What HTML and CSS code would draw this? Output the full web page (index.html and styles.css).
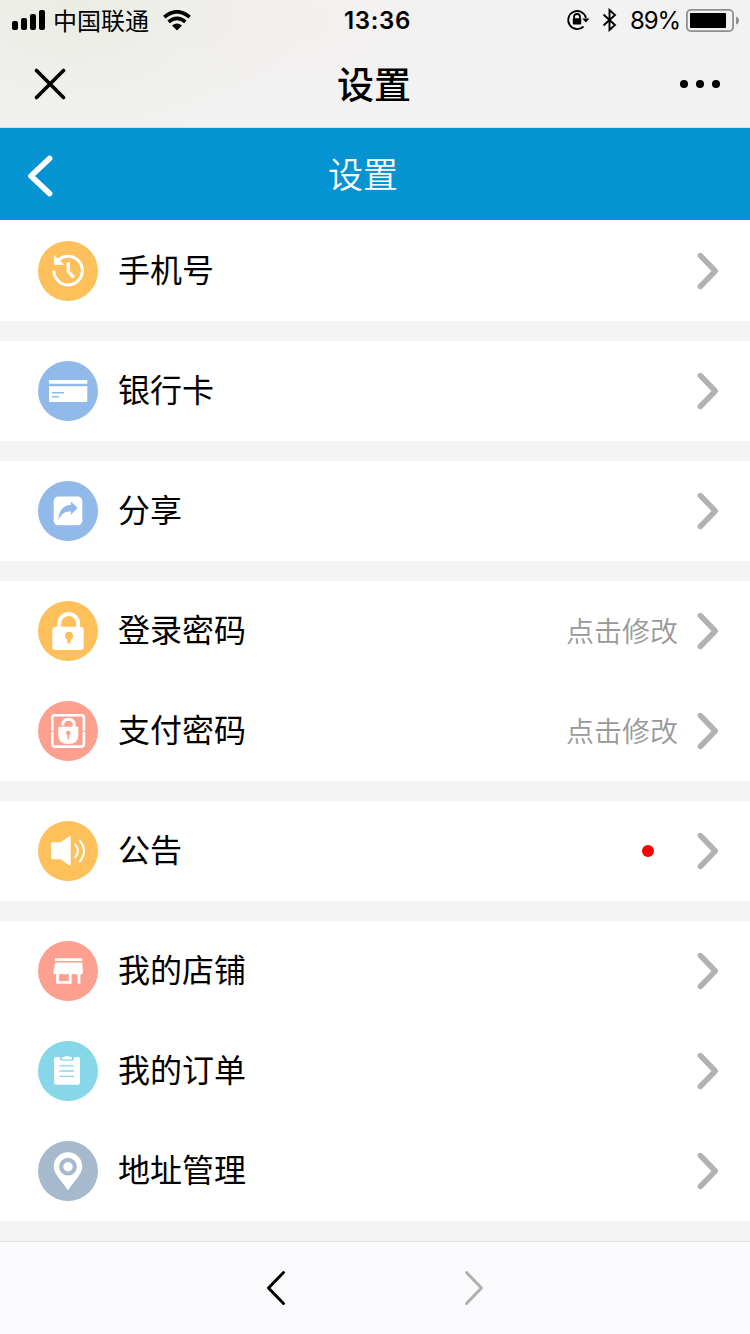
FILE: index.html
```html
<!DOCTYPE html>
<html lang="zh-CN">
<head>
<meta charset="utf-8">
<title>设置</title>
<link rel="stylesheet" href="styles.css">
</head>
<body>
<svg class="defs" width="0" height="0" aria-hidden="true">
  <symbol id="chevron" viewBox="0 0 24 40"><path d="M4.300 4.500 19.300 20 4.300 35.500" fill="none" stroke="#b2b2b2" stroke-width="5.400" stroke-linecap="round" stroke-linejoin="round"/></symbol>
</svg>
<div class="phone">
  <div class="top">
    <div class="status">
      <div class="status-left">
        <svg class="signal" width="33" height="20" viewBox="0 0 33 20"><rect y="11" width="6" height="9" rx="2"/><rect x="9" y="8" width="6" height="12" rx="2"/><rect x="18" y="4" width="6" height="16" rx="2"/><rect x="27" width="6" height="20" rx="2"/></svg>
        <span class="carrier">中国联通</span>
        <svg class="wifi" width="28" height="21" viewBox="0 0 28 21"><g fill="none" stroke="#000" stroke-width="3.700"><path d="M1.300 7.200Q14-3.600 26.700 7.200"/><path d="M5.600 11.800Q14 4.800 22.400 11.800"/></g><path d="M9 15.500Q14 11.500 19 15.500L14 20.500Z"/></svg>
      </div>
      <div class="time">13:36</div>
      <div class="status-right">
        <svg class="rotation" width="24" height="22" viewBox="0 0 24 22"><g fill="none" stroke="#000" stroke-width="1.800"><path d="M20 9A9 9 0 1 0 17.500 17.500"/><path d="M8 10V8a3 3 0 0 1 6 0v2"/></g><path d="M16.200 9.500h7.300l-3.600 4z"/><rect x="6.800" y="9.200" width="8.400" height="6.300" rx="1"/></svg>
        <svg class="bluetooth" width="15" height="24" viewBox="0 0 15 24"><path d="M1.500 6.500 13 17 7.500 22V2L13 7 1.500 17.500" fill="none" stroke="#000" stroke-width="1.900"/></svg>
        <span class="percent">89%</span>
        <svg class="battery" width="53" height="23" viewBox="0 0 53 23"><rect x=".9" y=".9" width="46.200" height="21.200" rx="4" fill="none" stroke="#909090" stroke-width="1.800"/><rect x="4" y="4" width="36" height="15" rx=".8"/><path d="M50 7.500Q53 8.500 53 11.500T50 15.500Z" fill="#909090"/></svg>
      </div>
    </div>
    <div class="titlebar">
      <svg width="32" height="32" viewBox="0 0 32 32"><path d="M2.500 2.500 29.500 29.500M29.500 2.500 2.500 29.500" stroke="#000" stroke-width="3.600" stroke-linecap="round"/></svg>
      <div class="title">设置</div>
      <svg width="40" height="8" viewBox="0 0 40 8"><circle cx="4" cy="4" r="4"/><circle cx="20" cy="4" r="4"/><circle cx="36" cy="4" r="4"/></svg>
    </div>
  </div>
  <div class="header">
    <svg width="26" height="42" viewBox="0 0 26 42"><path d="M22.500 3.500 4 21 22.500 38.500" fill="none" stroke="#fff" stroke-width="5.800" stroke-linecap="round" stroke-linejoin="round"/></svg>
    <div class="header-title">设置</div>
  </div>
  <div class="list">
    <div class="group">
      <div class="row">
        <svg class="icon orange" viewBox="0 0 60 60"><path d="M15.800 29.500A14.300 14.300 0 1 0 20.500 19" class="line" stroke-width="3"/><path d="M16.300 14.700v8.800h9.300z" stroke="#fff" stroke-width=".8" stroke-linejoin="round"/><path d="M30.300 21.500v9.200l5.500 5.700" class="line" stroke-width="3.200"/></svg>
        <span class="label">手机号</span><svg class="chevron"><use href="#chevron"/></svg>
      </div>
    </div>
    <div class="group">
      <div class="row">
        <svg class="icon blue" viewBox="0 0 60 60"><path d="M11 19h38.300v3.700H11z"/><path d="M11 25.300h38.300v14.200q0 1.500-1.500 1.500H12.500q-1.500 0-1.500-1.500z"/><path d="M14 31.700h12M14 35.700h7" class="cut" stroke-width="1.400"/></svg>
        <span class="label">银行卡</span><svg class="chevron"><use href="#chevron"/></svg>
      </div>
    </div>
    <div class="group">
      <div class="row">
        <svg class="icon blue" viewBox="0 0 60 60"><rect x="15.700" y="15.500" width="28.600" height="28.800" rx="4.500"/><path class="hole" d="M33 20.500 39.500 27 33 33.700V30.600C27 30 23 33.500 20.300 39.200 20.500 30 25 24 33 23.700Z"/></svg>
        <span class="label">分享</span><svg class="chevron"><use href="#chevron"/></svg>
      </div>
    </div>
    <div class="group">
      <div class="row">
        <svg class="icon orange" viewBox="0 0 60 60"><path d="M21.300 27V22.500a9.400 9.400 0 0 1 18.800 0V27" class="line" stroke-width="4"/><rect x="14.300" y="25.800" width="31.400" height="23.200" rx="3.500"/><circle class="hole" cx="31" cy="34.800" r="4"/><path class="hole" d="M29.300 36h3.400v5q0 1.500-1.700 1.500t-1.700-1.500z"/></svg>
        <span class="label">登录密码</span><span class="hint">点击修改</span><svg class="chevron"><use href="#chevron"/></svg>
      </div>
      <div class="row">
        <svg class="icon pink" viewBox="0 0 60 60"><rect x="14.300" y="14.300" width="31.600" height="31.300" rx="2.500" class="line" stroke-width="2.600"/><path class="cut" d="M12 30.300h5M43 30.300h5" stroke-width="1.100"/><path d="M24.800 24.600v-1.200a5.700 5.200 0 0 1 11.400 0V26.500" class="line" stroke-width="3"/><path d="M20.300 25.700h20v8.300q0 9-10 9t-10-9z"/><circle class="hole" cx="30.300" cy="32" r="2.300"/><path class="hole" d="M29.300 33h2l-.3 5.500h-1.400z"/></svg>
        <span class="label">支付密码</span><span class="hint">点击修改</span><svg class="chevron"><use href="#chevron"/></svg>
      </div>
    </div>
    <div class="group">
      <div class="row">
        <svg class="icon orange" viewBox="0 0 60 60"><path d="M15 21.300h7.700L31 15.600q1.700-.8 1.700.8v27q0 1.600-1.700.8L22.700 38.300H15q-2 0-2-2v-13q0-2 2-2z"/><path d="M36.800 22.800q6 7 0 14.200M41.200 19q9.500 11 0 22.300" class="line" stroke-width="2.100"/></svg>
        <span class="label">公告</span><span class="dot"></span><svg class="chevron"><use href="#chevron"/></svg>
      </div>
    </div>
    <div class="group">
      <div class="row">
        <svg class="icon pink" viewBox="0 0 60 60"><path d="M17 17.200h27.300v2.900H17z"/><path d="M17.200 21.500h27l.8 10.300q-1.300 2.400-3.600 1-2.200 1.500-5.500 0-3 1.500-6 0-3 1.500-6 0-3 1.500-5.500 0-2.300 1-3.100-1z"/><path d="M19.600 31.500v9.900h12.600v-9.900M41 31.500V42.500" class="line" stroke-width="2.900"/></svg>
        <span class="label">我的店铺</span><svg class="chevron"><use href="#chevron"/></svg>
      </div>
      <div class="row">
        <svg class="icon cyan" viewBox="0 0 60 60"><rect x="16" y="16" width="26" height="27.800" rx="2.200"/><path class="hole" d="M22 15h14v2.500q0 2.200-2.200 2.200h-9.600q-2.200 0-2.200-2.200z"/><path d="M24 16h2.500q0-1.300 2.500-1.300t2.500 1.300H34v2.400H24z"/><path d="M21.500 24.800h14.300M21.500 30h14.300M21.500 35.400h14.300" class="cut" stroke-width="1.300"/></svg>
        <span class="label">我的订单</span><svg class="chevron"><use href="#chevron"/></svg>
      </div>
      <div class="row">
        <svg class="icon slate" viewBox="0 0 60 60"><path d="M30 11.200A14.300 14.300 0 0 1 44.300 25.500C44.300 33 36 40 30 49.500 24 40 15.700 33 15.700 25.500A14.300 14.300 0 0 1 30 11.200Z"/><circle class="hole" cx="30" cy="25.700" r="8.900"/><circle cx="30" cy="25.700" r="4.700"/></svg>
        <span class="label">地址管理</span><svg class="chevron"><use href="#chevron"/></svg>
      </div>
    </div>
  </div>
  <div class="toolbar">
    <svg width="20" height="36" viewBox="0 0 20 36"><path d="M17.500 2.500 2.500 18 17.500 33.500" fill="none" stroke="#000" stroke-width="3" stroke-linecap="round" stroke-linejoin="round"/></svg>
    <svg width="20" height="36" viewBox="0 0 20 36"><path d="M2.500 2.500 17.500 18 2.500 33.500" fill="none" stroke="#b0b0b1" stroke-width="3" stroke-linecap="round" stroke-linejoin="round"/></svg>
  </div>
</div>
</body>
</html>
```
FILE: styles.css
```css
* { box-sizing: border-box; }
body { margin: 0; font-family: "Noto Sans CJK SC", sans-serif; color: #000; }
svg { display: block; flex: none; }
.phone { width: 750px; height: 1334px; display: flex; flex-direction: column; background: #f4f4f4; overflow: hidden; }
.top {
  height: 128px;
  border-bottom: 1px solid #d9dde0;
  background:
    radial-gradient(ellipse 240px 140px at 70px 10px, #ebece4 0%, rgba(235, 236, 228, 0) 100%),
    radial-gradient(ellipse 160px 90px at 290px 20px, #f4efef 0%, rgba(244, 239, 239, 0) 100%),
    #f2f2f2;
}
.status { height: 40px; display: grid; grid-template-columns: 1fr auto 1fr; grid-template-rows: 40px; align-items: center; padding: 0 11px 0 12px; }
.status-left { display: flex; align-items: center; height: 40px; }
.carrier { margin-left: 8px; font-size: 24px; line-height: 40px; }
.wifi { margin-left: 14px; }
.time { font: 600 24px/36px Inter, sans-serif; letter-spacing: 0.7px; margin: 2px 0 0 4px; }
.status-right { display: flex; align-items: center; justify-content: flex-end; height: 40px; }
.bluetooth { margin-left: 11px; }
.percent { margin: 2px 6px 0 13px; font: 24px/36px Inter, sans-serif; letter-spacing: -1.1px; }
.rotation { margin-right: 1px; }
.titlebar { height: 87px; padding: 0 30px 0 34px; display: grid; grid-template-columns: 1fr auto 1fr; align-items: center; }
.titlebar svg:last-child { justify-self: end; }
.title { font-size: 37px; font-weight: 500; line-height: 50px; margin: -1px 6px 0 0; }
.header { height: 92px; padding: 4px 27px 0; display: grid; grid-template-columns: 1fr auto 1fr; align-items: center; background: #0693d1; color: #fff; }
.header-title { font-size: 35px; line-height: 50px; margin: -6px 24px 0 0; font-weight: 350; }
.list { display: flex; flex-direction: column; gap: 20px; height: 1021px; }
.group { background: #fff; }
.group:first-child { padding-top: 1px; }
.row { height: 100px; padding: 0 30px 0 38px; display: flex; align-items: center; }
.icon { width: 60px; height: 60px; border-radius: 50%; background: var(--tone); fill: #fff; }
.icon .line { fill: none; stroke: #fff; }
.icon .cut { fill: none; stroke: var(--tone); }
.icon .hole { fill: var(--tone); }
.orange { --tone: #fec05b; }
.blue { --tone: #91b9e9; }
.pink { --tone: #fda08f; }
.cyan { --tone: #86d7e8; }
.slate { --tone: #a6b9cd; }
.label { flex: 1; margin: -6px 0 0 20px; font-size: 32px; line-height: 46px; }
.hint { margin: -2px 18px 0 0; font-size: 28px; line-height: 40px; color: #999; font-weight: 350; }
.dot { width: 12px; height: 12px; margin-right: 42px; border-radius: 50%; background: #f00; }
.chevron { width: 24px; height: 40px; }
.toolbar { height: 93px; border-top: 1px solid #e0e0e0; background: #fafafc; display: flex; justify-content: center; align-items: center; gap: 178px; }
```
